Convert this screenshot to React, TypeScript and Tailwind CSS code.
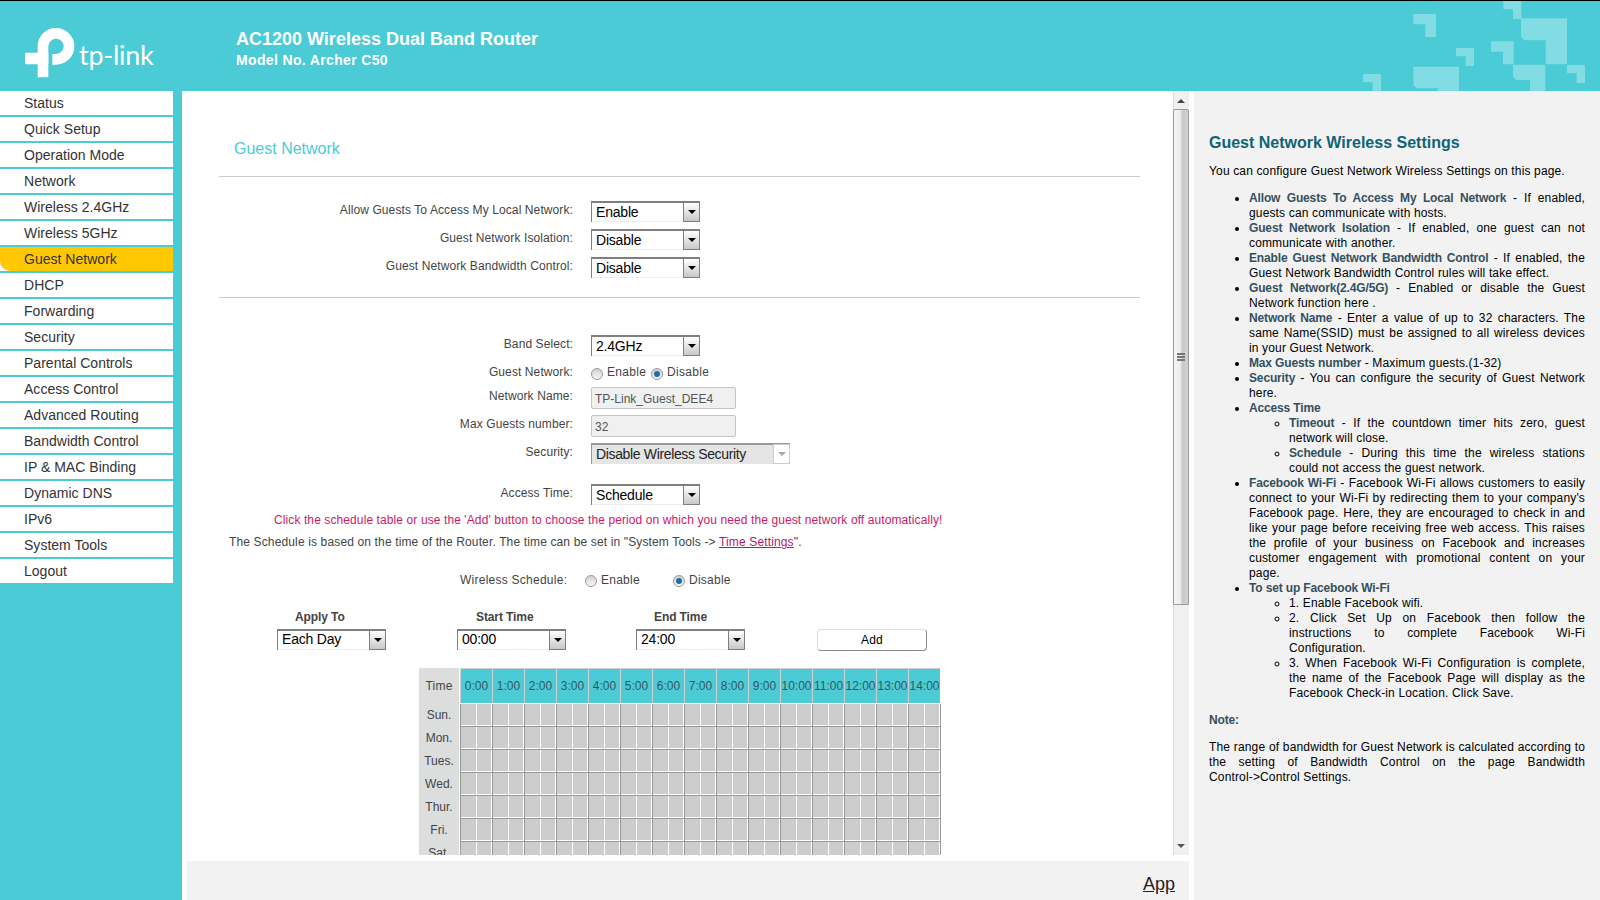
import React from "react";

const nav = ["Status","Quick Setup","Operation Mode","Network","Wireless 2.4GHz","Wireless 5GHz","Guest Network","DHCP","Forwarding","Security","Parental Controls","Access Control","Advanced Routing","Bandwidth Control","IP & MAC Binding","Dynamic DNS","IPv6","System Tools","Logout"];
const hours = Array.from({ length: 15 }, (_, i) => `${i}:00`);
const days = ["Sun.","Mon.","Tues.","Wed.","Thur.","Fri.","Sat."];

function Logo() {
  return (
    <div className="flex items-start w-[236px] shrink-0">
      <svg className="ml-[15px] mt-[19px] shrink-0" width="62" height="65" viewBox="0 0 186 195" aria-hidden="true">
        <path d="M84 172V79A39 39 0 1 1 122 118H112" fill="none" stroke="#fff" strokeWidth="32" />
        <rect x="30" y="98" width="70" height="35" rx="4" fill="#fff" />
      </svg>
      <span className="font-['Lato',sans-serif] font-normal text-white text-[27px] leading-[34px] mt-[37px] ml-[2px] tracking-[-0.3px]">tp-link</span>
    </div>
  );
}

function Deco() {
  const small = (x: number, y: number) => `M${x} ${y}h54v54h-25v-29h-29z`;
  const mid = (x: number, y: number) => `M${x} ${y}h68v69h-32v-38h-36z`;
  return (
    <svg className="absolute right-0 top-[-1px] pointer-events-none" width="300" height="91" viewBox="0 0 900 273" aria-hidden="true">
      <g fill="#81dce3">
        <path d={small(610, 3)} />
        <path d={small(468, 144)} />
        <path d={small(801, 195)} />
        <path d={small(189, 222)} />
        <path d={mid(340, 42)} />
        <path d={mid(573, 124)} />
        <path d="M663 55h138v138h-64v-72h-64l-10-10z" />
        <path d="M340 200h137v73h-64v-8h-63l-10-10z" />
        <path d="M639 194h97v79h-46v-33h-41l-10-10z" />
      </g>
    </svg>
  );
}

function Select({ value, w = "w-[109px]", gray = false, lift = false }: { value: string; w?: string; gray?: boolean; lift?: boolean }) {
  return (
    <div className={`${w} h-[21px] flex shrink-0 border-t-2 border-l border-[#7f7f7f] ${gray ? "bg-[#e5e5e5] border-[#999]" : "bg-white border-b-0"}`}>
      <div className={`flex-1 pl-[4px] text-[14px] ${lift ? "leading-[17px]" : "leading-[19px]"} ${gray ? "text-[#222] tracking-[-0.35px]" : "text-black tracking-[-0.2px] border-b border-[#eeeeee]"}`}>{value}</div>
      {gray ? (
        <div className="w-[17px] -mt-[1px] bg-white border border-[#ccc] flex items-center justify-center">
          <div className="w-0 h-0 border-x-[4px] border-x-transparent border-t-[4px] border-t-[#aaa]" />
        </div>
      ) : (
        <div className="w-[17px] -mt-[1px] border border-[#7f7f7f] bg-gradient-to-b from-white to-[#c8c8c8] flex items-center justify-center">
          <div className="w-0 h-0 border-x-[4px] border-x-transparent border-t-[4px] border-t-black" />
        </div>
      )}
    </div>
  );
}

function Label({ children }: { children: React.ReactNode }) {
  return <div className="w-[391px] mr-[18px] pt-[1px] shrink-0 text-right text-[12px] leading-[16px] tracking-[0.1px] text-[#444]">{children}</div>;
}

function Radio({ on = false }: { on?: boolean }) {
  return (
    <span className="w-[12px] h-[12px] shrink-0 rounded-full border border-[#9a9a9a] bg-gradient-to-b from-[#d0d0d0] to-[#f8f8f8] flex items-center justify-center">
      {on && <span className="w-[6px] h-[6px] rounded-full bg-[#1d6fa8]" />}
    </span>
  );
}

function Input({ value }: { value: string }) {
  return (
    <div className="w-[145px] h-[22px] pl-[3px] bg-[#f0f0f0] border border-[#c4c4c4] rounded-[2px] text-[12px] leading-[22px] text-[#555]">{value}</div>
  );
}

function Term({ children }: { children: React.ReactNode }) {
  return <b className="text-[#34505e] tracking-[-0.15px]">{children}</b>;
}

function Help() {
  return (
    <aside className="flex-1 bg-[#f2f2f2] pl-[15px] pr-[15px] text-[12px] leading-[15px] text-black tracking-[0.15px]">
      <h2 className="mt-[42px] text-[16px] leading-[20px] font-bold text-[#0f6378] tracking-normal">Guest Network Wireless Settings</h2>
      <p className="mt-[11px]">You can configure Guest Network Wireless Settings on this page.</p>
      <ul className="mt-[12px] pl-[40px] list-disc text-justify">
        <li><Term>Allow Guests To Access My Local Network</Term> - If enabled, guests can communicate with hosts.</li>
        <li><Term>Guest Network Isolation</Term> - If enabled, one guest can not communicate with another.</li>
        <li><Term>Enable Guest Network Bandwidth Control</Term> - If enabled, the Guest Network Bandwidth Control rules will take effect.</li>
        <li><Term>Guest Network(2.4G/5G)</Term> - Enabled or disable the Guest Network function here .</li>
        <li><Term>Network Name</Term> - Enter a value of up to 32 characters. The same Name(SSID) must be assigned to all wireless devices in your Guest Network.</li>
        <li><Term>Max Guests number</Term> - Maximum guests.(1-32)</li>
        <li><Term>Security</Term> - You can configure the security of Guest Network here.</li>
        <li><Term>Access Time</Term>
          <ul className="pl-[40px] list-[circle]">
            <li><Term>Timeout</Term> - If the countdown timer hits zero, guest network will close.</li>
            <li><Term>Schedule</Term> - During this time the wireless stations could not access the guest network.</li>
          </ul>
        </li>
        <li><Term>Facebook Wi-Fi</Term> - Facebook Wi-Fi allows customers to easily connect to your Wi-Fi by redirecting them to your company's Facebook page. Here, they are encouraged to check in and like your page before receiving free web access. This raises the profile of your business on Facebook and increases customer engagement with promotional content on your page.</li>
        <li><Term>To set up Facebook Wi-Fi</Term>
          <ul className="pl-[40px] list-[circle]">
            <li>1. Enable Facebook wifi.</li>
            <li>2. Click Set Up on Facebook then follow the instructions to complete Facebook Wi-Fi Configuration.</li>
            <li>3. When Facebook Wi-Fi Configuration is complete, the name of the Facebook Page will display as the Facebook Check-in Location. Click Save.</li>
          </ul>
        </li>
      </ul>
      <p className="mt-[12px]"><Term>Note:</Term></p>
      <p className="mt-[12px] text-justify">The range of bandwidth for Guest Network is calculated according to the setting of Bandwidth Control on the page Bandwidth <span className="whitespace-nowrap">Control-&gt;Control</span> Settings.</p>
    </aside>
  );
}

function Scrollbar() {
  return (
    <div className="w-[16px] h-full bg-[#f0f0f0] border-l border-[#dddddd] flex flex-col shrink-0">
      <div className="h-[18px] flex items-center justify-center pt-[1px] pr-[1px]">
        <div className="w-0 h-0 border-x-[4px] border-x-transparent border-b-[4px] border-b-[#444]" />
      </div>
      <div className="h-[496px] -ml-[1px] border border-[#9a9a9a] rounded-t-[2px] bg-[linear-gradient(90deg,#f6f6f6_0%,#ececec_45%,#c8c8c8_60%,#d2d2d2_100%)] flex flex-col items-center justify-center gap-[1px]">
        <div className="w-[8px] h-[2px] bg-[#777]" />
        <div className="w-[8px] h-[2px] bg-[#777]" />
        <div className="w-[8px] h-[2px] bg-[#777]" />
      </div>
      <div className="flex-1" />
      <div className="h-[18px] flex items-center justify-center pb-[1px] pr-[1px]">
        <div className="w-0 h-0 border-x-[4px] border-x-transparent border-t-[4px] border-t-[#555]" />
      </div>
    </div>
  );
}

function Table() {
  return (
    <div className="ml-[237px] mt-[17px] w-[522px] text-[12px] text-[#444]">
      <div className="flex h-[36px]">
        <div className="w-[41px] bg-[#dcdddd] border-r border-white flex items-center justify-center tracking-[0.2px]">Time</div>
        {hours.map((h) => (
          <div key={h} className="w-[32px] pb-[1px] bg-white">
            <div className="h-full bg-[#4acbd6] border-t border-l border-[#cfcfcf] flex items-center justify-center text-[#3a5660] leading-none">{h}</div>
          </div>
        ))}
      </div>
      {days.map((d) => (
        <div key={d} className="flex h-[23px]">
          <div className="w-[41px] bg-[#dcdddd] border-r border-white flex items-center justify-center pb-[2px]">{d}</div>
          {hours.map((h) => (
            <div key={h} className="w-[32px] border-l border-b border-[#999] flex items-start">
              <div className="w-[15px] h-[21px] bg-[#cccccc]" />
              <div className="w-[14px] h-[21px] ml-[1px] bg-[#cccccc]" />
            </div>
          ))}
          <div className="w-px bg-[#999]" />
        </div>
      ))}
    </div>
  );
}

export default function App() {
  return (
    <div className="w-[1600px] h-[900px] overflow-hidden flex flex-col bg-white font-['Liberation_Sans',Arial,sans-serif]">
      <header className="relative h-[91px] shrink-0 border-t border-black bg-[#4acbd6] flex text-white font-bold">
        <Logo />
        <div className="pt-[26px]">
          <div className="text-[18px] leading-[24px] tracking-normal">AC1200 Wireless Dual Band Router</div>
          <div className="text-[14px] leading-[18px] tracking-[0.35px]">Model No. Archer C50</div>
        </div>
        <Deco />
      </header>
      <div className="flex flex-1 min-h-0">
        <nav className="w-[182px] shrink-0 bg-[#4acbd6]">
          <div className="w-[173px] flex flex-col gap-[2px]">
            {nav.map((n) => (
              <div key={n} className="bg-white h-[24px]">
                <div className={`h-full pl-[24px] text-[14px] leading-[24px] text-[#333] tracking-[0.02px] ${n === "Guest Network" ? "bg-[#ffc800] rounded-bl-[10px]" : ""}`}>{n}</div>
              </div>
            ))}
          </div>
        </nav>
        <div className="w-[1012px] shrink-0 flex flex-col">
          <div className="h-[764px] flex shrink-0">
            <main className="w-[991px] h-full overflow-hidden">
              <h1 className="mt-[48px] ml-[52px] text-[16px] leading-[20px] text-[#4acbd6]">Guest Network</h1>
              <div className="mt-[17px] ml-[37px] w-[921px] h-px bg-[#cccccc]" />
              <div className="mt-[24px] flex flex-col gap-[7px]">
                <div className="flex h-[21px]"><Label>Allow Guests To Access My Local Network:</Label><Select value="Enable" /></div>
                <div className="flex h-[21px]"><Label>Guest Network Isolation:</Label><Select value="Disable" /></div>
                <div className="flex h-[21px]"><Label>Guest Network Bandwidth Control:</Label><Select value="Disable" /></div>
              </div>
              <div className="mt-[19px] ml-[37px] w-[921px] h-px bg-[#cccccc]" />
              <div className="mt-[37px] flex h-[21px]"><Label>Band Select:</Label><Select value="2.4GHz" /></div>
              <div className="mt-[7px] flex h-[21px]">
                <Label>Guest Network:</Label>
                <div className="flex items-start text-[12px] leading-[16px] text-[#444] tracking-[0.3px]">
                  <span className="mt-[5px]"><Radio /></span>
                  <span className="ml-[4px] mt-[1px] w-[44px]">Enable</span>
                  <span className="mt-[5px]"><Radio on /></span>
                  <span className="ml-[4px] mt-[1px]">Disable</span>
                </div>
              </div>
              <div className="mt-[3px] flex h-[22px]"><Label>Network Name:</Label><Input value="TP-Link_Guest_DEE4" /></div>
              <div className="mt-[6px] flex h-[22px]"><Label>Max Guests number:</Label><Input value="32" /></div>
              <div className="mt-[6px] flex h-[21px]"><Label>Security:</Label><Select value="Disable Wireless Security" w="w-[199px]" gray /></div>
              <div className="mt-[20px] flex h-[21px]"><Label>Access Time:</Label><Select value="Schedule" /></div>
              <p className="mt-[7px] ml-[92px] text-[12px] leading-[16px] text-[#cc1a66] tracking-[0.1px] whitespace-nowrap">Click the schedule table or use the 'Add' button to choose the period on which you need the guest network off automatically!</p>
              <p className="mt-[6px] ml-[47px] text-[12px] leading-[16px] text-[#444] tracking-[0.14px] whitespace-nowrap">The Schedule is based on the time of the Router. The time can be set in "System Tools -&gt; <span className="underline text-[#b2186b]">Time Settings</span>".</p>
              <div className="mt-[22px] ml-[278px] flex text-[12px] leading-[16px] text-[#444] tracking-[0.25px]">
                <span className="w-[125px]">Wireless Schedule:</span>
                <span className="mt-[3px]"><Radio /></span>
                <span className="ml-[4px] w-[72px]">Enable</span>
                <span className="mt-[3px]"><Radio on /></span>
                <span className="ml-[4px]">Disable</span>
              </div>
              <div className="mt-[21px] ml-[95px] flex text-[12px] leading-[16px] font-bold text-[#444] tracking-[-0.1px]">
                <div className="w-[109px] pl-[18px]">Apply To</div>
                <div className="w-[109px] pl-[19px] ml-[71px]">Start Time</div>
                <div className="w-[109px] pl-[18px] ml-[70px]">End Time</div>
              </div>
              <div className="mt-[4px] ml-[95px] flex">
                <Select value="Each Day" lift />
                <div className="ml-[71px]"><Select value="00:00" lift /></div>
                <div className="ml-[70px]"><Select value="24:00" lift /></div>
                <button className="ml-[72px] w-[110px] h-[22px] bg-white border border-[#dddddd] border-r-[#888] border-b-[#888] rounded-[4px] text-[12px] text-black tracking-[0.2px]">Add</button>
              </div>
              <Table />
            </main>
            <Scrollbar />
          </div>
          <div className="mt-[6px] ml-[5px] w-[1002px] h-[39px] bg-[#f2f2f2] flex items-end justify-end pr-[14px] pb-[5px] text-[18px] leading-[22px] text-[#222] underline">App</div>
        </div>
        <Help />
      </div>
    </div>
  );
}
